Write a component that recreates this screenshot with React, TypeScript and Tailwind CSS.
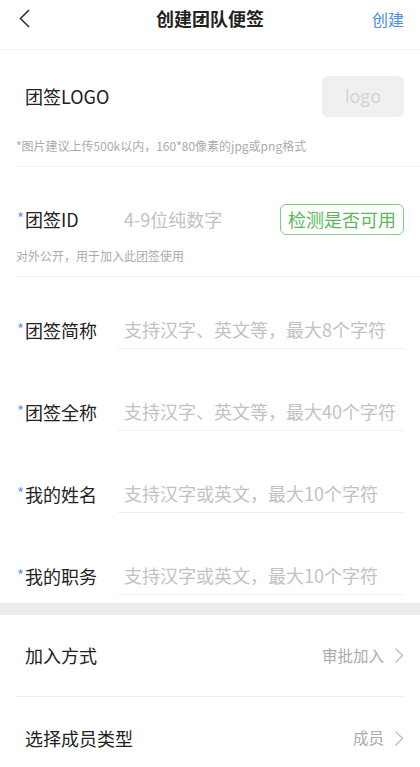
import React from 'react';

const font = "font-['Noto_Sans_CJK_SC','Noto_Sans',sans-serif]";

// 带星号的输入行
const InputRow: React.FC<{ label: string; placeholder: string; first?: boolean }> = ({ label, placeholder, first }) => (
  <div className={`flex pr-4 ${first ? 'pt-[34px]' : 'pt-[44px]'}`}>
    <div className="flex w-[118px] items-center pl-[17px]">
      <span className="mr-[1px] -mt-[4px] text-[15px] leading-none text-[#5d9cec]">*</span>
      <span className="text-[18px] text-[#222]">{label}</span>
    </div>
    <div className="flex h-[38px] flex-1 items-center border-b border-[#eeeeee] pl-[6px] text-[18px] text-[#c2c2c2]">
      {placeholder}
    </div>
  </div>
);

const Chevron = () => (
  <svg width="10" height="17" viewBox="0 0 10 17" fill="none" className="ml-[10px]">
    <polyline points="1.5,1.5 8.5,8.5 1.5,15.5" stroke="#bdbdbd" strokeWidth="1.4" />
  </svg>
);

export default function App() {
  return (
    <div className={`${font} min-h-[767px] w-[420px] overflow-hidden bg-white`}>
      {/* 顶部导航 */}
      <div className="relative flex h-[50px] items-center justify-center border-b border-[#eeeeee]">
        <svg width="12" height="20" viewBox="0 0 12 20" fill="none" className="absolute left-[19px] top-[9px]">
          <polyline points="10,1 1.5,9.5 10,18" stroke="#333" strokeWidth="1.6" />
        </svg>
        <span className="-mt-[12px] text-[18px] font-bold text-[#222]">创建团队便签</span>
        <span className="absolute right-[16px] top-[7px] text-[16px] text-[#4a90e2]">创建</span>
      </div>

      {/* LOGO */}
      <div className="ml-4 border-b border-[#eeeeee] pb-[12px] pt-[26px]">
        <div className="flex items-center justify-between pr-4">
          <span className="pl-[9px] text-[18px] text-[#222]">团签LOGO</span>
          <div className="flex h-[41px] w-[82px] items-center justify-center rounded-[6px] bg-[#f0f0f0] font-['Open_Sans',sans-serif] text-[18px] text-[#d2d2d2]">
            logo
          </div>
        </div>
        <div className="mt-[21px] text-[12px] leading-[16px] text-[#ababab]">*图片建议上传500k以内，160*80像素的jpg或png格式</div>
      </div>

      {/* 团签ID */}
      <div className="ml-4 border-b border-[#eeeeee] pb-[12px] pt-[37px]">
        <div className="flex items-center pr-4">
          <div className="flex w-[108px] items-center pl-[1px]">
            <span className="mr-[1px] -mt-[4px] text-[15px] leading-none text-[#5d9cec]">*</span>
            <span className="text-[18px] text-[#222]">团签ID</span>
          </div>
          <span className="flex-1 text-[18px] text-[#c2c2c2]">4-9位纯数字</span>
          <div className="flex h-[31px] w-[124px] items-center justify-center rounded-[6px] border border-[#86c888] text-[18px] text-[#5cb85c]">
            检测是否可用
          </div>
        </div>
        <div className="mt-[13px] text-[12px] leading-[16px] text-[#ababab]">对外公开，用于加入此团签使用</div>
      </div>

      <InputRow first label="团签简称" placeholder="支持汉字、英文等，最大8个字符" />
      <InputRow label="团签全称" placeholder="支持汉字、英文等，最大40个字符" />
      <InputRow label="我的姓名" placeholder="支持汉字或英文，最大10个字符" />
      <InputRow label="我的职务" placeholder="支持汉字或英文，最大10个字符" />

      <div className="mt-[8px] h-[12px] bg-[#ececec]" />

      {/* 选择项 */}
      <div className="mx-4">
        <div className="flex h-[82px] items-center justify-between border-b border-[#eeeeee] pl-[9px]">
          <span className="text-[18px] text-[#222]">加入方式</span>
          <div className="flex items-center text-[15.5px] text-[#aaaaaa]">
            审批加入
            <Chevron />
          </div>
        </div>
        <div className="flex h-[82px] items-center justify-between pl-[9px]">
          <span className="text-[18px] text-[#222]">选择成员类型</span>
          <div className="flex items-center text-[15.5px] text-[#aaaaaa]">
            成员
            <Chevron />
          </div>
        </div>
      </div>
    </div>
  );
}
